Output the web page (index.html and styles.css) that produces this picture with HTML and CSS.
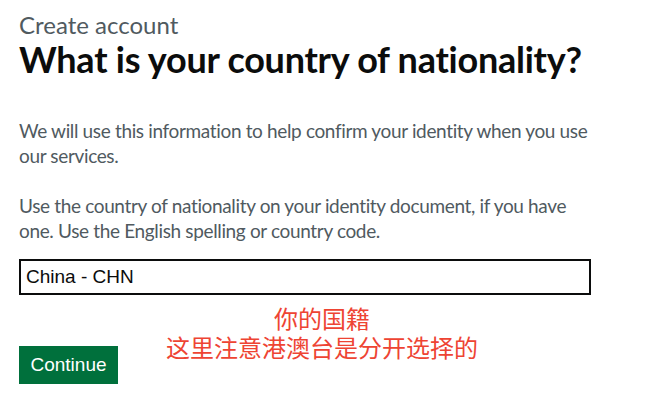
FILE: index.html
```html
<!DOCTYPE html>
<html lang="en">
<head>
<meta charset="utf-8">
<title>What is your country of nationality?</title>
<link rel="stylesheet" href="styles.css">
</head>
<body>
<main class="page">
  <span class="caption">Create account</span>
  <h1 class="heading">What is your country of nationality?</h1>
  <p class="hint">We will use this information to help confirm your identity when you use our services.</p>
  <p class="hint">Use the country of nationality on your identity document, if you have one. Use the English spelling or country code.</p>
  <input class="field" type="text" value="China - CHN" aria-label="Country of nationality">
  <button class="button" type="button">Continue</button>
  <div class="note" lang="zh-CN">
    <div>你的国籍</div>
    <div>这里注意港澳台是分开选择的</div>
  </div>
</main>
</body>
</html>
```

FILE: styles.css
```css
html, body {
  margin: 0;
  padding: 0;
  background: #ffffff;
}

.page {
  position: relative;
  width: 600px;
  padding: 10px 0 0 19px;
  display: flex;
  flex-direction: column;
  align-items: flex-start;
  font-family: Lato, "Liberation Sans", sans-serif;
  color: #0b0c0c;
}

.caption {
  font-size: 24px;
  line-height: 30px;
  color: #505a5f;
}

.heading {
  margin: 0;
  font-size: 36px;
  line-height: 38px;
  font-weight: 700;
  letter-spacing: -0.25px;
  white-space: nowrap;
}

.hint {
  width: 575px;
  margin: 40px 0 0 0;
  font-size: 19px;
  line-height: 25px;
  letter-spacing: -0.35px;
  color: #505a5f;
}

.hint + .hint {
  margin-top: 25px;
}

.field {
  box-sizing: border-box;
  margin: 16px 0 0 0;
  width: 572px;
  height: 36px;
  padding: 0 5px;
  border: 2px solid #0b0c0c;
  border-radius: 0;
  font-family: "Liberation Sans", Arial, sans-serif;
  font-size: 19px;
  color: #0b0c0c;
}

.button {
  margin-top: 51px;
  width: 99px;
  height: 38px;
  border: 0;
  border-radius: 0;
  padding: 0 0 1px 0;
  background: #00703c;
  box-shadow: 0 2px 0 #002d18;
  color: #ffffff;
  font-family: "Liberation Sans", Arial, sans-serif;
  font-size: 19px;
  cursor: pointer;
}

.note {
  position: absolute;
  top: 303px;
  left: 19px;
  width: 606px;
  text-align: center;
  font-family: "Noto Sans CJK SC", sans-serif;
  font-size: 24px;
  line-height: 29px;
  color: #ee4433;
}
```
